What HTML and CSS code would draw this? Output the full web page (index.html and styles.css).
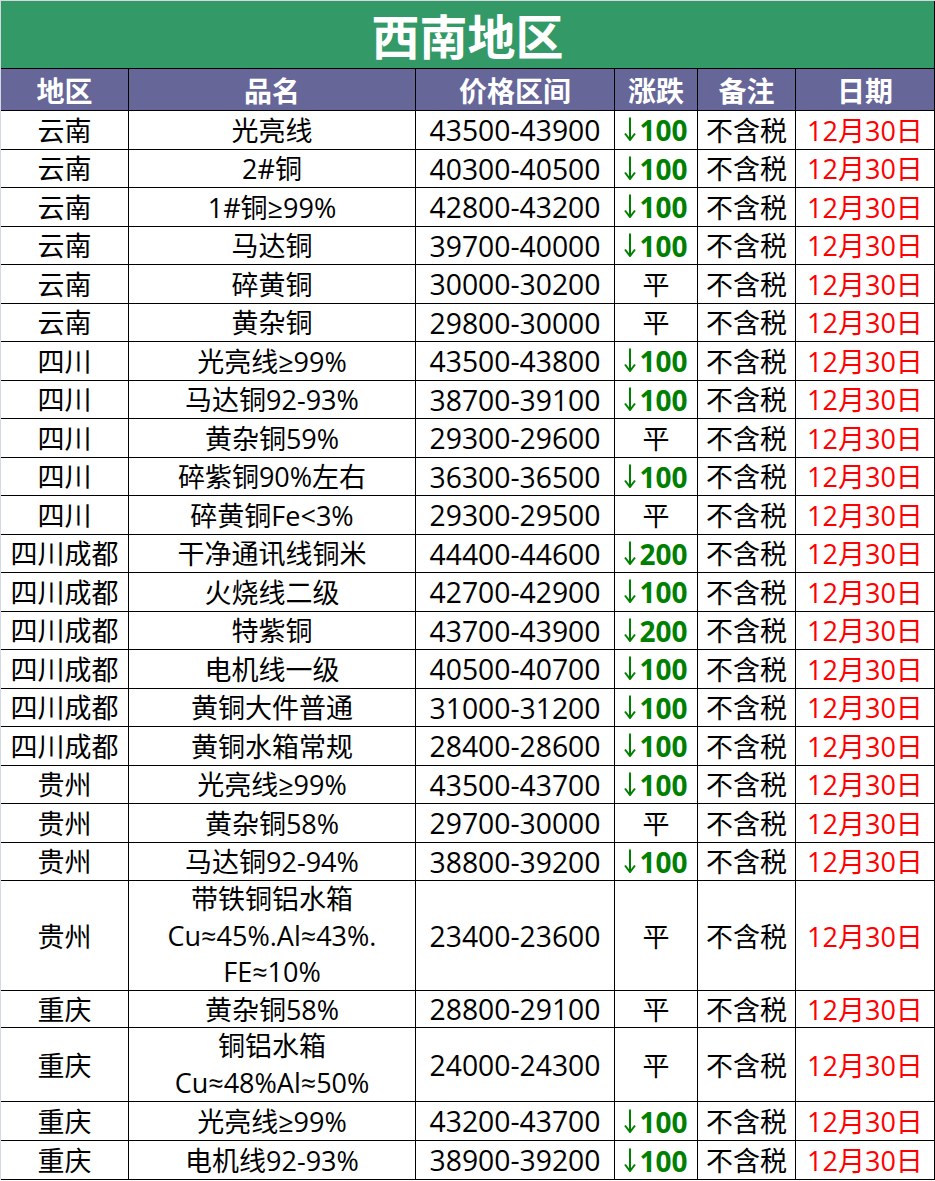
FILE: index.html
```html
<!DOCTYPE html>
<html lang="zh-CN">
<head>
<meta charset="utf-8">
<title>西南地区</title>
<link rel="stylesheet" href="styles.css">
</head>
<body>
<svg width="0" height="0" class="defs" aria-hidden="true">
  <symbol id="down" viewBox="0 0 12 24">
    <path d="M6 0.5 V23 M1 16.5 L6 23 L11 16.5" fill="none" stroke="#008000" stroke-width="2" stroke-linejoin="miter"/>
  </symbol>
</svg>
<div class="sheet">
  <div class="banner">西南地区</div>
  <div class="row head">
    <div class="c">地区</div><div class="c">品名</div><div class="c">价格区间</div><div class="c">涨跌</div><div class="c">备注</div><div class="c">日期</div>
  </div>
  <div class="row"><div class="c">云南</div><div class="c">光亮线</div><div class="c num">43500-43900</div><div class="c dn"><svg class="ar"><use href="#down"/></svg>100</div><div class="c">不含税</div><div class="c date">12月30日</div></div>
  <div class="row"><div class="c">云南</div><div class="c">2#铜</div><div class="c num">40300-40500</div><div class="c dn"><svg class="ar"><use href="#down"/></svg>100</div><div class="c">不含税</div><div class="c date">12月30日</div></div>
  <div class="row"><div class="c">云南</div><div class="c">1#铜≥99%</div><div class="c num">42800-43200</div><div class="c dn"><svg class="ar"><use href="#down"/></svg>100</div><div class="c">不含税</div><div class="c date">12月30日</div></div>
  <div class="row"><div class="c">云南</div><div class="c">马达铜</div><div class="c num">39700-40000</div><div class="c dn"><svg class="ar"><use href="#down"/></svg>100</div><div class="c">不含税</div><div class="c date">12月30日</div></div>
  <div class="row"><div class="c">云南</div><div class="c">碎黄铜</div><div class="c num">30000-30200</div><div class="c">平</div><div class="c">不含税</div><div class="c date">12月30日</div></div>
  <div class="row"><div class="c">云南</div><div class="c">黄杂铜</div><div class="c num">29800-30000</div><div class="c">平</div><div class="c">不含税</div><div class="c date">12月30日</div></div>
  <div class="row"><div class="c">四川</div><div class="c">光亮线≥99%</div><div class="c num">43500-43800</div><div class="c dn"><svg class="ar"><use href="#down"/></svg>100</div><div class="c">不含税</div><div class="c date">12月30日</div></div>
  <div class="row"><div class="c">四川</div><div class="c">马达铜92-93%</div><div class="c num">38700-39100</div><div class="c dn"><svg class="ar"><use href="#down"/></svg>100</div><div class="c">不含税</div><div class="c date">12月30日</div></div>
  <div class="row"><div class="c">四川</div><div class="c">黄杂铜59%</div><div class="c num">29300-29600</div><div class="c">平</div><div class="c">不含税</div><div class="c date">12月30日</div></div>
  <div class="row"><div class="c">四川</div><div class="c">碎紫铜90%左右</div><div class="c num">36300-36500</div><div class="c dn"><svg class="ar"><use href="#down"/></svg>100</div><div class="c">不含税</div><div class="c date">12月30日</div></div>
  <div class="row"><div class="c">四川</div><div class="c">碎黄铜Fe&lt;3%</div><div class="c num">29300-29500</div><div class="c">平</div><div class="c">不含税</div><div class="c date">12月30日</div></div>
  <div class="row"><div class="c">四川成都</div><div class="c">干净通讯线铜米</div><div class="c num">44400-44600</div><div class="c dn"><svg class="ar"><use href="#down"/></svg>200</div><div class="c">不含税</div><div class="c date">12月30日</div></div>
  <div class="row"><div class="c">四川成都</div><div class="c">火烧线二级</div><div class="c num">42700-42900</div><div class="c dn"><svg class="ar"><use href="#down"/></svg>100</div><div class="c">不含税</div><div class="c date">12月30日</div></div>
  <div class="row"><div class="c">四川成都</div><div class="c">特紫铜</div><div class="c num">43700-43900</div><div class="c dn"><svg class="ar"><use href="#down"/></svg>200</div><div class="c">不含税</div><div class="c date">12月30日</div></div>
  <div class="row"><div class="c">四川成都</div><div class="c">电机线一级</div><div class="c num">40500-40700</div><div class="c dn"><svg class="ar"><use href="#down"/></svg>100</div><div class="c">不含税</div><div class="c date">12月30日</div></div>
  <div class="row"><div class="c">四川成都</div><div class="c">黄铜大件普通</div><div class="c num">31000-31200</div><div class="c dn"><svg class="ar"><use href="#down"/></svg>100</div><div class="c">不含税</div><div class="c date">12月30日</div></div>
  <div class="row"><div class="c">四川成都</div><div class="c">黄铜水箱常规</div><div class="c num">28400-28600</div><div class="c dn"><svg class="ar"><use href="#down"/></svg>100</div><div class="c">不含税</div><div class="c date">12月30日</div></div>
  <div class="row"><div class="c">贵州</div><div class="c">光亮线≥99%</div><div class="c num">43500-43700</div><div class="c dn"><svg class="ar"><use href="#down"/></svg>100</div><div class="c">不含税</div><div class="c date">12月30日</div></div>
  <div class="row"><div class="c">贵州</div><div class="c">黄杂铜58%</div><div class="c num">29700-30000</div><div class="c">平</div><div class="c">不含税</div><div class="c date">12月30日</div></div>
  <div class="row"><div class="c">贵州</div><div class="c">马达铜92-94%</div><div class="c num">38800-39200</div><div class="c dn"><svg class="ar"><use href="#down"/></svg>100</div><div class="c">不含税</div><div class="c date">12月30日</div></div>
  <div class="row tall3"><div class="c">贵州</div><div class="c multi">带铁铜铝水箱<br>Cu≈45%.Al≈43%.<br>FE≈10%</div><div class="c num">23400-23600</div><div class="c">平</div><div class="c">不含税</div><div class="c date">12月30日</div></div>
  <div class="row r37"><div class="c">重庆</div><div class="c">黄杂铜58%</div><div class="c num">28800-29100</div><div class="c">平</div><div class="c">不含税</div><div class="c date">12月30日</div></div>
  <div class="row tall2"><div class="c">重庆</div><div class="c multi">铜铝水箱<br>Cu≈48%Al≈50%</div><div class="c num">24000-24300</div><div class="c">平</div><div class="c">不含税</div><div class="c date">12月30日</div></div>
  <div class="row r39"><div class="c">重庆</div><div class="c">光亮线≥99%</div><div class="c num">43200-43700</div><div class="c dn"><svg class="ar"><use href="#down"/></svg>100</div><div class="c">不含税</div><div class="c date">12月30日</div></div>
  <div class="row r39"><div class="c">重庆</div><div class="c">电机线92-93%</div><div class="c num">38900-39200</div><div class="c dn"><svg class="ar"><use href="#down"/></svg>100</div><div class="c">不含税</div><div class="c date">12月30日</div></div>
</div>
</body>
</html>
```

FILE: styles.css
```css
html, body {
  margin: 0;
  padding: 0;
  background: #ffffff;
}
.defs {
  position: absolute;
  width: 0;
  height: 0;
  overflow: hidden;
}
.sheet {
  width: 934px;
  border-top: 1px solid #d3d8e2;
  border-left: 1px solid #d3d8e2;
  font-family: "Open Sans", "Noto Sans CJK SC", sans-serif;
  font-size: 27px;
  color: #000000;
}
.banner {
  box-sizing: border-box;
  height: 68px;
  background: #339966;
  color: #ffffff;
  font-family: "Noto Sans CJK SC", sans-serif;
  font-weight: 700;
  font-size: 48px;
  line-height: 67px;
  text-align: center;
  border-right: 1px solid #000000;
  border-bottom: 1px solid #000000;
}
.row {
  display: grid;
  grid-template-columns: 128px 287px 199px 83px 98px 139px;
  height: 38.5px;
  box-sizing: border-box;
  border-bottom: 1px solid #000000;
}
.c {
  box-sizing: border-box;
  border-right: 1px solid #000000;
  display: flex;
  align-items: center;
  justify-content: center;
  text-align: center;
  white-space: nowrap;
  line-height: 1;
  padding-top: 1px;
}
.head {
  height: 42px;
  background: #666699;
  color: #ffffff;
  font-family: "Noto Sans CJK SC", sans-serif;
  font-weight: 700;
  font-size: 28px;
}
.num {
  font-size: 28.3px;
}
.dn {
  color: #008000;
  font-weight: 700;
  font-size: 28px;
}
.ar {
  width: 12px;
  height: 24px;
  margin-right: 3px;
  margin-top: -2px;
  flex: none;
}
.date {
  color: #ff0000;
}
.multi {
  line-height: 36.5px;
  padding-top: 0;
}
.tall3 {
  height: 110px;
}
.tall2 {
  height: 74px;
}
.r37 {
  height: 37px;
}
.r39 {
  height: 39px;
}
```
